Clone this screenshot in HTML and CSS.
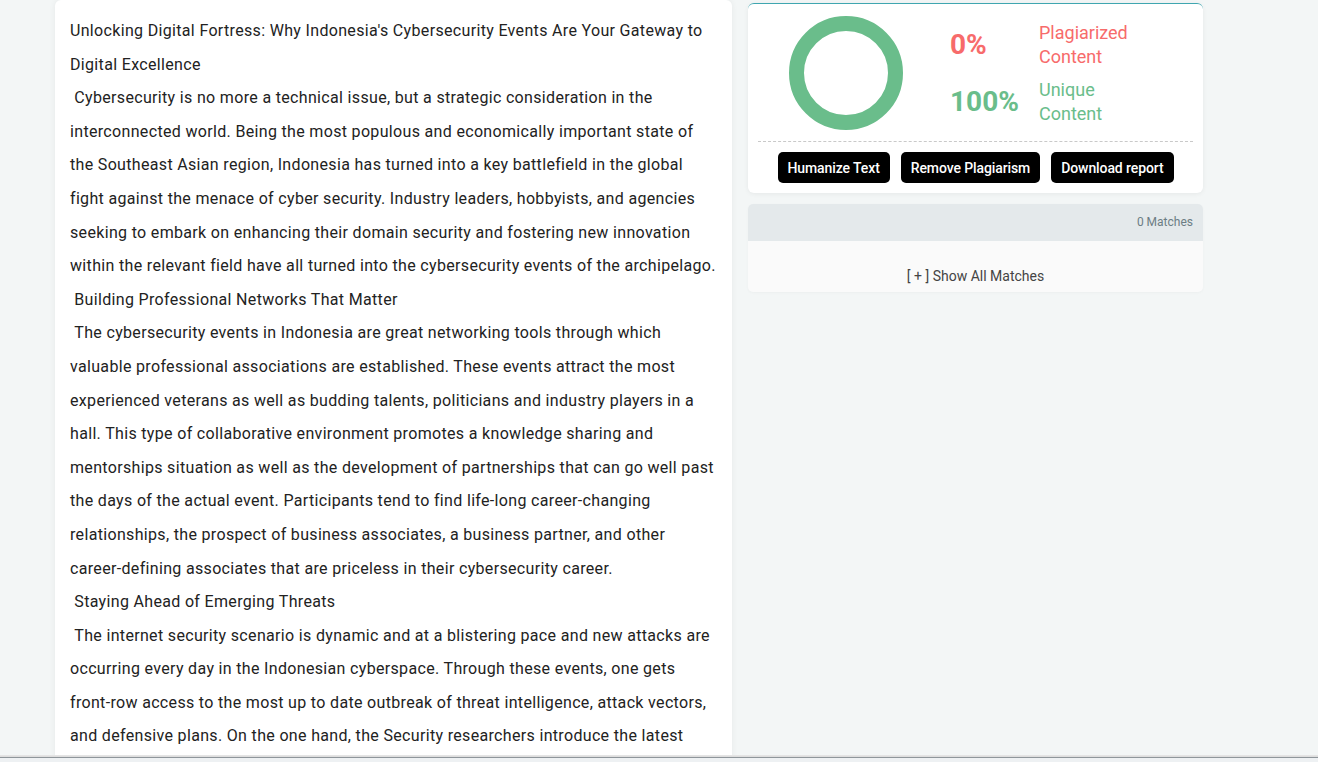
FILE: index.html
```html
<!DOCTYPE html>
<html lang="en">
<head>
<meta charset="UTF-8" />
<meta name="viewport" content="width=device-width, initial-scale=1.0"/>
<title>Plagiarism Report</title>
<link rel="stylesheet" href="styles.css">
</head>
<body>
<div class="page">

<!-- Checked text -->
<div class="text-card">
<div class="para">Unlocking Digital Fortress: Why Indonesia's Cybersecurity Events Are Your Gateway to Digital Excellence</div>
<div class="para">&nbsp;Cybersecurity is no more a technical issue, but a strategic consideration in the interconnected world. Being the most populous and economically important state of the Southeast Asian region, Indonesia has turned into a key battlefield in the global fight against the menace of cyber security. Industry leaders, hobbyists, and agencies seeking to embark on enhancing their domain security and fostering new innovation within the relevant field have all turned into the cybersecurity events of the archipelago.</div>
<div class="para">&nbsp;Building Professional Networks That Matter</div>
<div class="para">&nbsp;The cybersecurity events in Indonesia are great networking tools through which valuable professional associations are established. These events attract the most experienced veterans as well as budding talents, politicians and industry players in a hall. This type of collaborative environment promotes a knowledge sharing and mentorships situation as well as the development of partnerships that can go well past the days of the actual event. Participants tend to find life-long career-changing relationships, the prospect of business associates, a business partner, and other career-defining associates that are priceless in their cybersecurity career.</div>
<div class="para">&nbsp;Staying Ahead of Emerging Threats</div>
<div class="para">&nbsp;The internet security scenario is dynamic and at a blistering pace and new attacks are occurring every day in the Indonesian cyberspace. Through these events, one gets front-row access to the most up to date outbreak of threat intelligence, attack vectors, and defensive plans. On the one hand, the Security researchers introduce the latest findings and the practitioners share their hands-on experience of dealing with real incidents.</div>
</div>

<!-- Result sidebar -->
<div class="sidebar">
<div class="result-card">
<div class="result-top">
<div class="donut">
<svg width="114" height="114" viewBox="0 0 114 114">
<circle cx="57" cy="57" r="49.5" fill="none" stroke="#6abd8b" stroke-width="15"/>
</svg>
</div>
<div class="stats">
<div class="stat plag">
<div class="stat-num">0%</div>
<div class="stat-label">Plagiarized Content</div>
</div>
<div class="stat unique">
<div class="stat-num">100%</div>
<div class="stat-label">Unique Content</div>
</div>
</div>
</div>
<div class="actions">
<button>Humanize Text</button>
<button>Remove Plagiarism</button>
<button>Download report</button>
</div>
</div>

<div class="matches-card">
<div class="matches-head">0 Matches</div>
<div class="matches-body">[ + ] Show All Matches</div>
</div>
</div>

</div>
<div class="bottom-bar"></div>
</body>
</html>
```

FILE: styles.css
```css
* {
box-sizing: border-box;
margin: 0;
padding: 0;
}

body {
font-family: Roboto, 'Liberation Sans', Arial, sans-serif;
background: #f3f6f6;
height: 100vh;
overflow: hidden;
}

.page {
display: flex;
align-items: flex-start;
gap: 16px;
margin-left: 55px;
width: 1148px;
}

.text-card {
width: 677px;
flex: none;
background: #fff;
border-radius: 6px;
padding: 14px 15px 40px 15px;
box-shadow: 0 0 6px rgba(0, 0, 0, 0.06);
color: #222;
font-size: 16px;
line-height: 33.6px;
letter-spacing: 0.33px;
}

.sidebar {
width: 455px;
flex: none;
padding-top: 3px;
}

.result-card {
background: #fff;
border-top: 1px solid #3fa6b0;
border-radius: 6px;
box-shadow: 0 1px 5px rgba(0, 0, 0, 0.06);
padding: 12px 10px 10px;
}

.result-top {
display: flex;
align-items: center;
padding-left: 31px;
padding-bottom: 11px;
border-bottom: 1px dashed #c9c9c9;
}

.donut {
width: 114px;
height: 114px;
}

.donut svg {
display: block;
}

.stats {
margin-left: 47px;
display: flex;
flex-direction: column;
gap: 9px;
}

.stat {
display: flex;
align-items: center;
height: 48px;
}

.stat-num {
width: 89px;
font-size: 28px;
font-weight: 700;
}

.stat-label {
width: 120px;
font-size: 18px;
line-height: 24px;
}

.plag { color: #f76b6b; }
.unique { color: #6abd8b; }

.actions {
display: flex;
justify-content: center;
gap: 11px;
padding-top: 10px;
}

button {
background: #000;
color: #fff;
border: none;
border-radius: 5px;
height: 31px;
padding: 0 10px;
font-family: Roboto, 'Liberation Sans', Arial, sans-serif;
font-size: 14px;
font-weight: 500;
letter-spacing: -0.1px;
}

.matches-card {
margin-top: 11px;
border-radius: 5px;
overflow: hidden;
background: #fafafa;
box-shadow: 0 1px 3px rgba(0, 0, 0, 0.03);
}

.matches-head {
background: #e4e9eb;
height: 37px;
line-height: 37px;
text-align: right;
padding-right: 10px;
font-size: 12px;
color: #6c7d84;
}

.matches-body {
height: 51px;
padding-top: 26px;
text-align: center;
font-size: 14px;
line-height: 18px;
color: #444;
}

.bottom-bar {
position: fixed;
left: 0;
right: 0;
bottom: 0;
height: 7px;
background: linear-gradient(#e8e8e8 0, #dadada 2px, #8f969b 2px, #8f969b 3px, #eef1f3 3px);
}
```
